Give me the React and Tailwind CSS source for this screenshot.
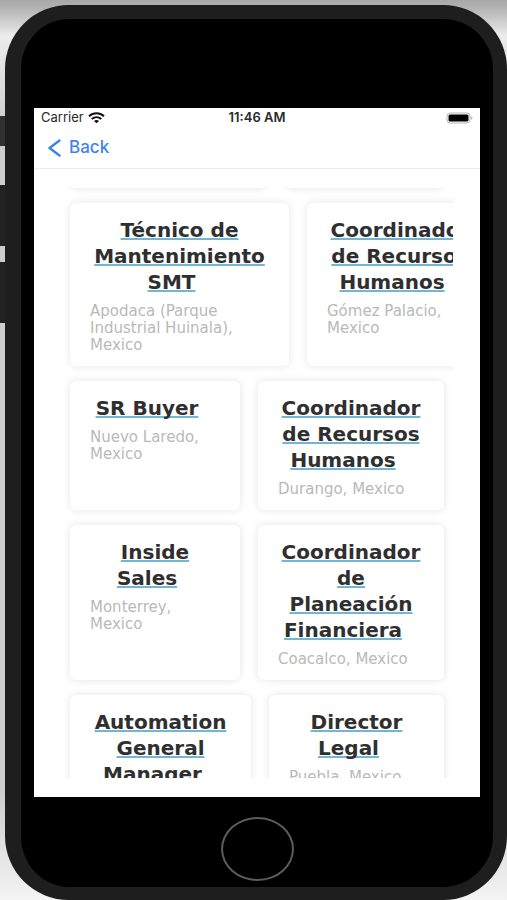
import clsx from 'clsx';

const ROWS = [
  [
    { title: 'Técnico de Mantenimiento SMT', place: 'Apodaca (Parque Industrial Huinala), Mexico', size: 'basis-[219px]' },
    { title: 'Coordinador de Recursos Humanos', place: 'Gómez Palacio, Mexico', size: 'basis-[186px]' },
  ],
  [
    { title: 'SR Buyer', place: 'Nuevo Laredo, Mexico', size: 'basis-[170px]' },
    { title: 'Coordinador de Recursos Humanos', place: 'Durango, Mexico', size: 'basis-[186px]' },
  ],
  [
    { title: 'Inside Sales', place: 'Monterrey, Mexico', size: 'basis-[170px]' },
    { title: 'Coordinador de Planeación Financiera', place: 'Coacalco, Mexico', size: 'basis-[186px]' },
  ],
  [
    { title: 'Automation General Manager', place: '', size: 'basis-[181px]' },
    { title: 'Director Legal', place: 'Puebla, Mexico', size: 'basis-[175px]' },
  ],
];

export default function App() {
  return (
    <div className="flex h-screen overflow-hidden bg-[linear-gradient(#a8a8a8,#b4b4b4_1%,#ececec_4%,#cdcdcd_14%,#cdcdcd_88%,#f4f4f4)]">
      <SideButtons />
      <div className="mt-[5px] flex min-w-0 flex-1 flex-col rounded-[64px] border-[14px] border-l-[16px] border-b-[13px] border-[#1e1e1e] bg-black px-[13px] pt-[89px]">
        <div className="flex min-h-0 flex-1 flex-col bg-white">
          <StatusBar />
          <nav className="flex h-[41px] shrink-0 items-center border-b border-[#ececec] px-3.5">
            <button type="button" className="flex items-center gap-2 font-['Inter',sans-serif] text-[17px] font-medium text-[#3f83f1]">
              <svg viewBox="0 0 13 18" className="h-[18px] w-[13px]" fill="none" stroke="currentColor" strokeWidth="2.4" strokeLinecap="round" strokeLinejoin="round">
                <path d="M11.500 1.500 1.500 9 11.500 16.500" />
              </svg>
              Back
            </button>
          </nav>
          <JobList />
        </div>
        <div className="flex h-[90px] shrink-0 items-start justify-center pt-5">
          <button type="button" aria-label="Home" className="h-16 w-[73px] rounded-[50%] border-2 border-[#5c5c5c]" />
        </div>
      </div>
    </div>
  );
}

function SideButtons() {
  return (
    <div className="flex w-[5px] shrink-0 flex-col pt-[116px]">
      <div className="h-[30px] bg-[#303030]" />
      <div className="mt-[39px] h-[61px] bg-[#222222]" />
      <div className="mt-4 h-[61px] bg-[#222222]" />
    </div>
  );
}

function StatusBar() {
  return (
    <header className="grid h-5 shrink-0 grid-cols-[1fr_auto_1fr] items-center px-[7px] font-['Inter',sans-serif] text-[13px] text-[#2a2a2a]">
      <div className="flex items-center gap-1">
        Carrier
        <svg viewBox="0 0 17 12" className="h-3 w-[17px]" fill="none" stroke="#111111" strokeWidth="2">
          <path d="M1 4.2C5.2 0.4 11.800 0.4 16 4.2" />
          <path d="M3.800 7C6.600 4.500 10.400 4.500 13.200 7" />
          <path d="M8.500 11.200 6 8.900C7.500 7.700 9.500 7.700 11 8.900Z" fill="#111111" stroke="none" />
        </svg>
      </div>
      <div className="font-semibold">11:46 AM</div>
      <svg viewBox="0 0 27 12" className="h-3 w-[27px] justify-self-end">
        <rect x="1" y="1" width="23" height="10" rx="3" fill="#ffffff" stroke="#b5b5b5" />
        <rect x="2.500" y="2.500" width="20" height="7" rx="1.500" fill="#000000" />
        <path d="M25.300 4.500C26.800 5.200 26.800 6.800 25.300 7.500Z" fill="#8a8a8a" />
      </svg>
    </header>
  );
}

function JobList() {
  return (
    <main className="mt-[18px] mr-[27px] mb-[19px] ml-5 flex min-h-0 flex-1 flex-col gap-[15px] overflow-hidden pr-[9px] pl-4">
      {/* bottom edge of the row scrolled out of view */}
      <div className="-mt-[15px] flex h-4 shrink-0 gap-[18px]">
        <div className="grow basis-[197px] rounded-md bg-white shadow-[0_0_9px_#0000001c]" />
        <div className="grow basis-[159px] rounded-md bg-white shadow-[0_0_9px_#0000001c]" />
      </div>
      {ROWS.map((jobs, i) => (
        <div key={i} className="flex shrink-0 gap-[18px]">
          {jobs.map((job) => <JobCard key={job.title} {...job} />)}
        </div>
      ))}
    </main>
  );
}

function JobCard({ title, place, size }) {
  return (
    <article className={clsx('min-w-0 shrink-0 grow rounded-md bg-white px-5 pt-3.5 pb-3 shadow-[0_0_9px_#0000001c]', size)}>
      <h3 className="text-center font-['DejaVu_Sans',sans-serif] text-[20px] leading-[26px] font-bold text-[#2f2f2f]">
        <a href="#" className="pr-4 underline decoration-[#6fb7d3] decoration-2 underline-offset-1 [text-decoration-skip-ink:none]">
          {title}
        </a>
      </h3>
      {place && <p className="mt-2 font-['DejaVu_Sans',sans-serif] text-[15px] leading-[17px] text-[#b9b9b9]">{place}</p>}
    </article>
  );
}
